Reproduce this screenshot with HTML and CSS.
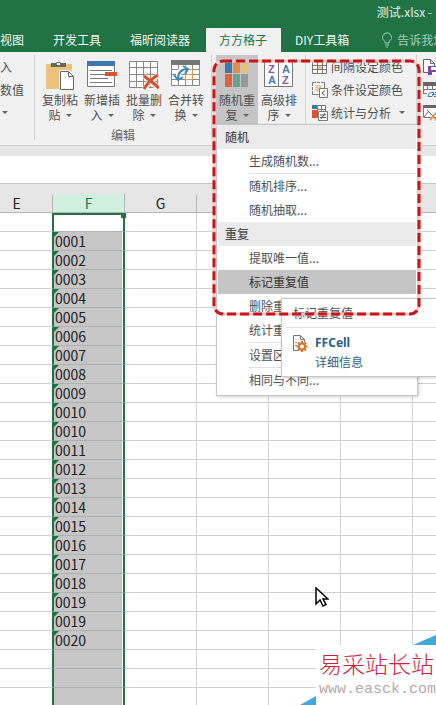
FILE: index.html
```html
<!DOCTYPE html>
<html lang="zh-CN">
<head>
  <meta charset="UTF-8">
  <meta name="viewport" content="width=device-width, initial-scale=1">
  <title>测试.xlsx</title>
  <link rel="stylesheet" href="styles.css">
</head>
<body>
<div class="window">

  <header class="titlebar">测试.xlsx -</header>

  <nav class="tabs">
    <button class="tab">视图</button>
    <button class="tab">开发工具</button>
    <button class="tab">福昕阅读器</button>
    <button class="tab active">方方格子</button>
    <button class="tab">DIY工具箱</button>
    <button class="tab tell">
      <svg width="12" height="16" viewBox="0 0 12 16" fill="none" stroke="#a5cdb6"><path d="M4 11V9.500C2.500 8.500 1.500 7.200 1.500 5.400a4.500 4.500 0 0 1 9 0c0 1.800-1 3.100-2.500 4.100V11zM4 13h4M5 15h2"/></svg>
      告诉我您
    </button>
  </nav>

  <section class="ribbon">
    <div class="group cut">
      <button class="small">入</button>
      <button class="small">数值</button>
      <button class="small"><i class="arrow"></i></button>
    </div>

    <div class="group">
      <div class="buttons">
        <button class="big">
          <svg width="30" height="30" viewBox="0 0 30 30"><path fill="#eac27c" d="M1 4h26v25H1z"/><path fill="#f2f2f2" d="M14 10h11l5 5v15H14z"/><path fill="#666" d="M6 3h5a3 3 0 0 1 5 0h5v4H6z"/><path fill="#fff" d="M12 3h3v2h-3z"/><path fill="#fff" stroke="#666" d="M15.500 11.500h8l5 5v13h-13zM23.500 11.500v5h5"/></svg>
          <span>复制粘<br>贴<i class="arrow"></i></span>
        </button>
        <button class="big">
          <svg width="30" height="30" viewBox="0 0 30 30"><path fill="#fff" stroke="#777" d="M.5 1.500h27v25H.5z"/><path fill="#3f78ae" d="M0 1h28v5H0z"/><path stroke="#777" d="M3 10.500h22M3 14.500h15M3 18.500h18M3 22.500h22"/><path fill="#dc5330" d="M18 12h12v4H18z"/></svg>
          <span>新增插<br>入<i class="arrow"></i></span>
        </button>
        <button class="big">
          <svg width="30" height="30" viewBox="0 0 30 30"><path fill="#fff" stroke="#888" d="M.5 1.500h28v26H.5zM7.500 1v26M14.500 1v26M21.500 1v26M0 7.500h28M0 14.500h28M0 21.500h28"/><path fill="none" stroke="#f0f0f0" stroke-width="5" d="M15 16l15 13M29 15L15 29"/><path fill="none" stroke="#d9512c" stroke-width="3" d="M15 16q7 5 15 12M29 15Q20 20 15 29"/></svg>
          <span>批量删<br>除<i class="arrow"></i></span>
        </button>
        <button class="big">
          <svg width="30" height="30" viewBox="0 0 30 30"><path fill="#fff" stroke="#888" d="M.5.500h28v25H.5zM7.500 5v20M14.500 5v20M21.500 5v20M0 9.500h28M0 14.500h28M0 19.500h28"/><path fill="#777" d="M0 0h29v5H0z"/><path fill="#fff" stroke="#e39a54" d="M14.500 9.500h7v10h-7zM14.500 14.500h7"/><path fill="none" stroke="#fff" stroke-width="5" d="M7 18C7 12 10 9 16 8"/><path fill="none" stroke="#3f7fba" stroke-width="2" d="M7 19C7 12 10 9 17 9M12 6l5 3-3 5M3 15l4 5 5-3"/></svg>
          <span>合并转<br>换<i class="arrow"></i></span>
        </button>
      </div>
      <div class="caption">编辑</div>
    </div>

    <div class="group random">
      <div class="dropdown">
        <button class="big open">
          <svg width="30" height="30" viewBox="0 0 30 30"><path fill="#3f78ae" d="M3 2h7v11H3z"/><path fill="#e58b48" d="M11 2h7v11h-7z"/><path fill="#e8bd7b" d="M19 2h7v11h-7z"/><path fill="#dc6442" d="M3 14h7v13H3z"/><path fill="#68a78d" d="M11 14h7v13h-7z"/><path fill="#999" d="M19 14h7v13h-7z"/></svg>
          <span>随机重<br>复<i class="arrow"></i></span>
        </button>

        <div class="menu">
          <h2>随机</h2>
          <button>生成随机数...</button>
          <hr>
          <button>随机排序...</button>
          <button>随机抽取...</button>
          <h2>重复</h2>
          <button>提取唯一值...</button>
          <button class="hover">标记重复值</button>
          <button>删除重</button>
          <button>统计重</button>
          <hr>
          <button>设置区</button>
          <hr>
          <button>相同与不同...</button>

          <div class="tooltip">
            <p>标记重复值</p>
            <hr>
            <div class="addin">
              <svg width="15" height="18" viewBox="0 0 15 18"><path fill="#fff" stroke="#777" d="M6 16.500H.5V1.500h7l4 4V8M7.500 1.500v4h4"/><path stroke="#999" d="M2 8.500h2M2 11.500h2"/><circle cx="9" cy="12.500" r="3" fill="none" stroke="#dd6f22" stroke-width="2"/><path stroke="#dd6f22" stroke-width="2" d="M9 7v2M9 16v2M3.500 12.500h2M12.500 12.500h2M5 8.500l1.500 1.500M11.500 15l1.500 1.500M5 16.500L6.500 15M11.500 10L13 8.500"/></svg>
              <div>
                <b>FFCell</b>
                <a href="#">详细信息</a>
              </div>
            </div>
          </div>
        </div>
      </div>
      <button class="big">
        <svg class="az" width="30" height="30" viewBox="0 0 30 30"><path fill="#fff" stroke="#777" d="M.5 1.500h14v25H.5zM14.500 1.500h14v25h-14z"/><text class="z" x="4" y="13">Z</text><text x="4" y="24">A</text><text x="18" y="13">A</text><text class="z" x="18" y="24">Z</text></svg>
        <span>高级排<br>序<i class="arrow"></i></span>
      </button>
    </div>

    <div class="group list">
      <button class="small">
        <svg width="16" height="16" viewBox="0 0 16 16"><path fill="#fff" d="M.5 1.500h14v13H.5z"/><path fill="#e8c88a" d="M5 6h5v4H5z"/><path fill="none" stroke="#777" d="M.5 1.500h14v13H.5zM5.500 1v13M10.500 1v13M0 6.500h14M0 10.500h14"/></svg>
        间隔设定颜色
      </button>
      <button class="small">
        <svg width="16" height="16" viewBox="0 0 16 16"><path fill="#fff" stroke="#777" d="M.5.500h12v12H.5z"/><path fill="#e8c88a" d="M3 3h7v7H3z"/><path stroke="#fff" stroke-dasharray="1 2" d="M0 4.500h12M0 8.500h12M4.500 0v12M8.500 0v12"/><path fill="#fff" stroke="#777" d="M7.500 6.500h8v9h-8z"/><path fill="none" stroke="#555" d="M13 8.500l-3 2.500 3 2.500"/></svg>
        条件设定颜色
      </button>
      <button class="small">
        <svg width="16" height="16" viewBox="0 0 16 16"><path fill="#3f78ae" d="M0 0h5v4H0z"/><path fill="#dc5330" d="M0 5h5v8H0z"/><path fill="#fff" stroke="#777" d="M5.500.500h8v12h-8zM9.500 0v12M5 4.500h8"/><path fill="#fff" stroke="#777" d="M6.500 6.500h9v9h-9z"/><path fill="none" stroke="#555" d="M8 10h6M8 12.500h6M13 8l-4 6"/></svg>
        统计与分析<i class="arrow"></i>
      </button>
    </div>

    <div class="group list">
      <button class="small">
        <svg width="16" height="16" viewBox="0 0 16 16"><path fill="#fff" stroke="#666" d="M5 13.500H.5V.500h7l4 4V7M7.500.500v4h4"/><path fill="#8145a6" d="M5 7h11v9H5z"/><path fill="#fff" d="M8 8h6v3H8zM9 13h5v3H9z"/></svg>
      </button>
      <button class="small">
        <svg width="16" height="16" viewBox="0 0 16 16"><path fill="#fff" stroke="#777" d="M.5.500h15v11H.5zM4.500 0v11M9.500 0v11M0 7.500h15"/><path fill="#666" d="M0 0h16v4H0z"/><path fill="#f1f1f1" d="M4 8h12v8H4z"/><path fill="none" stroke="#3f7fba" d="M8 10.500h3l-2 4H5l1-3zM12 10.500h4M11 14.500h5M9 12.500h5"/></svg>
      </button>
      <button class="small">
        <svg width="16" height="16" viewBox="0 0 16 16"><path fill="#fff" stroke="#777" d="M.5.500h15v12H.5z"/><path fill="#666" d="M0 0h16v3H0z"/><path stroke="#666" d="M4 5l9 9M1 12l5-6"/><path stroke="#e39a54" stroke-width="2" d="M13 8l-6 7M12 15l3-3"/></svg>
      </button>
    </div>
  </section>

  <div class="formula-bar"></div>

  <main class="sheet">
    <table>
      <colgroup>
        <col class="first"><col><col><col><col><col><col class="last">
      </colgroup>
      <thead>
        <tr><th>E</th><th class="sel">F</th><th>G</th><th></th><th></th><th></th><th></th></tr>
      </thead>
      <tbody>
        <tr><td></td><td class="sel top"></td><td></td><td></td><td></td><td></td><td></td></tr>
        <tr><td></td><td class="sel num">0001</td><td></td><td></td><td></td><td></td><td></td></tr>
        <tr><td></td><td class="sel num">0002</td><td></td><td></td><td></td><td></td><td></td></tr>
        <tr><td></td><td class="sel num">0003</td><td></td><td></td><td></td><td></td><td></td></tr>
        <tr><td></td><td class="sel num">0004</td><td></td><td></td><td></td><td></td><td></td></tr>
        <tr><td></td><td class="sel num">0005</td><td></td><td></td><td></td><td></td><td></td></tr>
        <tr><td></td><td class="sel num">0006</td><td></td><td></td><td></td><td></td><td></td></tr>
        <tr><td></td><td class="sel num">0007</td><td></td><td></td><td></td><td></td><td></td></tr>
        <tr><td></td><td class="sel num">0008</td><td></td><td></td><td></td><td></td><td></td></tr>
        <tr><td></td><td class="sel num">0009</td><td></td><td></td><td></td><td></td><td></td></tr>
        <tr><td></td><td class="sel num">0010</td><td></td><td></td><td></td><td></td><td></td></tr>
        <tr><td></td><td class="sel num">0010</td><td></td><td></td><td></td><td></td><td></td></tr>
        <tr><td></td><td class="sel num">0011</td><td></td><td></td><td></td><td></td><td></td></tr>
        <tr><td></td><td class="sel num">0012</td><td></td><td></td><td></td><td></td><td></td></tr>
        <tr><td></td><td class="sel num">0013</td><td></td><td></td><td></td><td></td><td></td></tr>
        <tr><td></td><td class="sel num">0014</td><td></td><td></td><td></td><td></td><td></td></tr>
        <tr><td></td><td class="sel num">0015</td><td></td><td></td><td></td><td></td><td></td></tr>
        <tr><td></td><td class="sel num">0016</td><td></td><td></td><td></td><td></td><td></td></tr>
        <tr><td></td><td class="sel num">0017</td><td></td><td></td><td></td><td></td><td></td></tr>
        <tr><td></td><td class="sel num">0018</td><td></td><td></td><td></td><td></td><td></td></tr>
        <tr><td></td><td class="sel num">0019</td><td></td><td></td><td></td><td></td><td></td></tr>
        <tr><td></td><td class="sel num">0019</td><td></td><td></td><td></td><td></td><td></td></tr>
        <tr><td></td><td class="sel num">0020</td><td></td><td></td><td></td><td></td><td></td></tr>
        <tr><td></td><td class="sel"></td><td></td><td></td><td></td><td></td><td></td></tr>
        <tr><td></td><td class="sel"></td><td></td><td></td><td></td><td></td><td></td></tr>
        <tr><td></td><td class="sel"></td><td></td><td></td><td></td><td></td><td></td></tr>
      </tbody>
    </table>
  </main>

  <!-- red marker around the menu -->
  <svg class="marker" width="210" height="258" viewBox="0 0 210 258"><rect x="2" y="2" width="205" height="253" rx="9" fill="none" stroke="#f7c9c4" stroke-width="3"/><rect x="2" y="2" width="205" height="253" rx="9" fill="none" stroke="#cb1419" stroke-width="3" stroke-dasharray="9 4"/></svg>

  <svg class="cursor" width="14" height="21" viewBox="0 0 14 21"><path fill="#fff" stroke="#000" stroke-width="1.500" d="M1 1v16l4-4 3 6 3-1.500-3-5.500h5z"/></svg>

  <div class="watermark">
    <svg width="136" height="70" viewBox="0 0 136 70"><path fill="#3fa9d8" d="M113 10l23-10v10zM0 70l16-9v9z"/></svg>
    <div class="site">
      <strong>易采站长站</strong>
      <span>www.easck.com</span>
    </div>
  </div>
</div>
</body>
</html>
```
FILE: styles.css
```css
* {
  box-sizing: border-box;
}
body {
  margin: 0;
  font-family: "Noto Sans CJK SC", sans-serif;
  font-size: 12px;
  color: #505050;
}
button {
  padding: 0;
  border: none;
  background: none;
  font: inherit;
  color: inherit;
  cursor: pointer;
}
svg {
  display: block;
  flex: none;
}
.window {
  position: relative;
  height: 100vh;
  overflow: hidden;
  background: #fff;
}

/* title and tabs */
.titlebar {
  height: 28px;
  padding-right: 4px;
  background: #217346;
  color: #e4f0e9;
  line-height: 24px;
  text-align: right;
}
.tabs {
  display: flex;
  height: 24px;
  background: #217346;
  color: #f0f8f3;
}
.tab {
  flex: none;
  padding: 0 15px 0 14px;
  line-height: 22px;
  white-space: nowrap;
}
.tab:first-child {
  padding-left: 0;
}
.tab.active {
  margin-left: 1px;
  padding: 0 14px 0 13px;
  background: #f1f1f1;
  color: #217346;
}
.tab.tell {
  display: flex;
  align-items: center;
  gap: 4px;
  padding-left: 17px;
  color: #a5cdb6;
}

/* ribbon */
.ribbon {
  display: flex;
  height: 94px;
  background: #f1f1f1;
  border-bottom: 1px solid #cfcfcf;
}
.group {
  flex: none;
  margin: 3px 0 5px;
  padding: 0 4px;
  border-right: 1px solid #d4d4d4;
}
.group.cut {
  width: 35px;
  padding: 0;
}
.buttons,
.random {
  display: flex;
}
.random {
  padding: 0 5px 0 4px;
}
.big {
  display: flex;
  flex-direction: column;
  align-items: center;
  width: 42px;
  height: 69px;
  padding-top: 5px;
  line-height: 15px;
}
.big span {
  margin-top: 2px;
  white-space: nowrap;
}
.big.open {
  background: #c5c5c5;
}
.az text {
  font: bold 11px "Liberation Sans", sans-serif;
  fill: #3f7fae;
}
.az .z {
  fill: #8c55a5;
}
.caption {
  margin-top: 2px;
  line-height: 18px;
  text-align: center;
  color: #666;
}
.arrow {
  display: inline-block;
  margin-left: 5px;
  border: 3px solid transparent;
  border-top-color: #666;
  border-bottom: none;
  vertical-align: 3px;
}
.small {
  display: flex;
  align-items: center;
  gap: 3px;
  height: 23px;
  white-space: nowrap;
}
.cut .arrow {
  margin-left: 2px;
}
.list {
  padding: 0 11px 0 6px;
}

/* drop-down menu */
.dropdown {
  position: relative;
}
.menu {
  position: absolute;
  z-index: 2;
  top: 69px;
  left: 0;
  width: 202px;
  padding: 0 1px 3px;
  background: #fff;
  border: 1px solid #c6c6c6;
  box-shadow: 1px 1px 3px rgba(0,0,0,0.2);
}
.menu h2 {
  margin: 0;
  padding-left: 7px;
  background: #ebebeb;
  font-size: 12px;
  font-weight: 500;
  line-height: 24px;
}
.menu button {
  display: block;
  width: 100%;
  padding-left: 31px;
  line-height: 24px;
  text-align: left;
}
.menu button.hover {
  background: #c5c5c5;
  color: #333;
}
.menu hr {
  height: 1px;
  margin: 0 0 0 31px;
  border: none;
  background: #e1e1e1;
}
.tooltip {
  position: absolute;
  top: 173px;
  left: 64px;
  width: 240px;
  height: 79px;
  padding: 0 4px;
  background: #fff;
  border: 1px solid #c6c6c6;
  box-shadow: 1px 1px 3px rgba(0,0,0,0.2);
}
.tooltip p {
  margin: 0;
  padding-left: 7px;
  line-height: 28px;
}
.menu .tooltip hr {
  margin: 0;
}
.addin {
  display: flex;
  gap: 7px;
  padding: 6px 7px;
}
.addin b,
.addin a {
  display: block;
  line-height: 20px;
  color: #2b5f8c;
  text-decoration: none;
}
.addin b {
  font-family: "Noto Sans", sans-serif;
  line-height: 18px;
}

/* formula bar and sheet */
.formula-bar {
  height: 38px;
  border-top: 10px solid #e6e6e6;
  border-bottom: 1px solid #c6c6c6;
}
.sheet {
  padding-top: 10px;
  background: #e6e6e6;
}
table {
  width: 100%;
  table-layout: fixed;
  border-collapse: separate;
  border-spacing: 0;
  background: #fff;
  font-size: 14px;
  color: #222;
}
col {
  width: 72px;
}
col.first {
  width: 53px;
}
col.last {
  width: auto;
}
th,
td {
  height: 19px;
  padding: 0;
  border-right: 1px solid #d0d0d0;
  border-bottom: 1px solid #d0d0d0;
  line-height: 18px;
}
th {
  background: #e6e6e6;
  border-color: #b5b5b5;
  font-weight: 400;
}
th:first-child {
  padding-right: 19px;
}
td:first-child {
  border-right-color: #217346;
}
tr :last-child {
  border-right: none;
}
th.sel {
  background: #d2f0e0;
  color: #217346;
}
td.sel {
  position: relative;
  padding-left: 1px;
  background: #c6c6c6;
  border-left: 1px solid #217346;
  border-right: 2px solid #217346;
  border-bottom-color: #b0b0b0;
  box-shadow: inset -1px 0 #fff;
}
td.top {
  background: #fff;
  border-top: 2px solid #217346;
}
/* fill handle */
td.top::after {
  content: "";
  position: absolute;
  top: -2px;
  right: -3px;
  width: 5px;
  height: 5px;
  background: #217346;
}
/* text-number warning */
td.num::before {
  content: "";
  position: absolute;
  top: 0;
  left: 0;
  border-top: 5px solid #17753a;
  border-right: 5px solid transparent;
}

/* overlays */
.marker {
  position: absolute;
  z-index: 3;
  top: 59px;
  left: 212px;
  pointer-events: none;
}
.cursor {
  position: absolute;
  top: 587px;
  left: 315px;
}
.watermark {
  position: absolute;
  right: 0;
  bottom: 0;
}
.site {
  position: absolute;
  right: 0;
  bottom: 0;
  width: 120px;
  height: 60px;
  padding-left: 3px;
  background: #fff;
}
.site strong,
.site span {
  display: block;
  white-space: nowrap;
}
.site strong {
  color: #d3203a;
  font-size: 23px;
  font-weight: 300;
  line-height: 36px;
}
.site span {
  color: #b3a9a9;
  font-family: "Liberation Mono", monospace;
  font-size: 15px;
  line-height: 18px;
}
```
